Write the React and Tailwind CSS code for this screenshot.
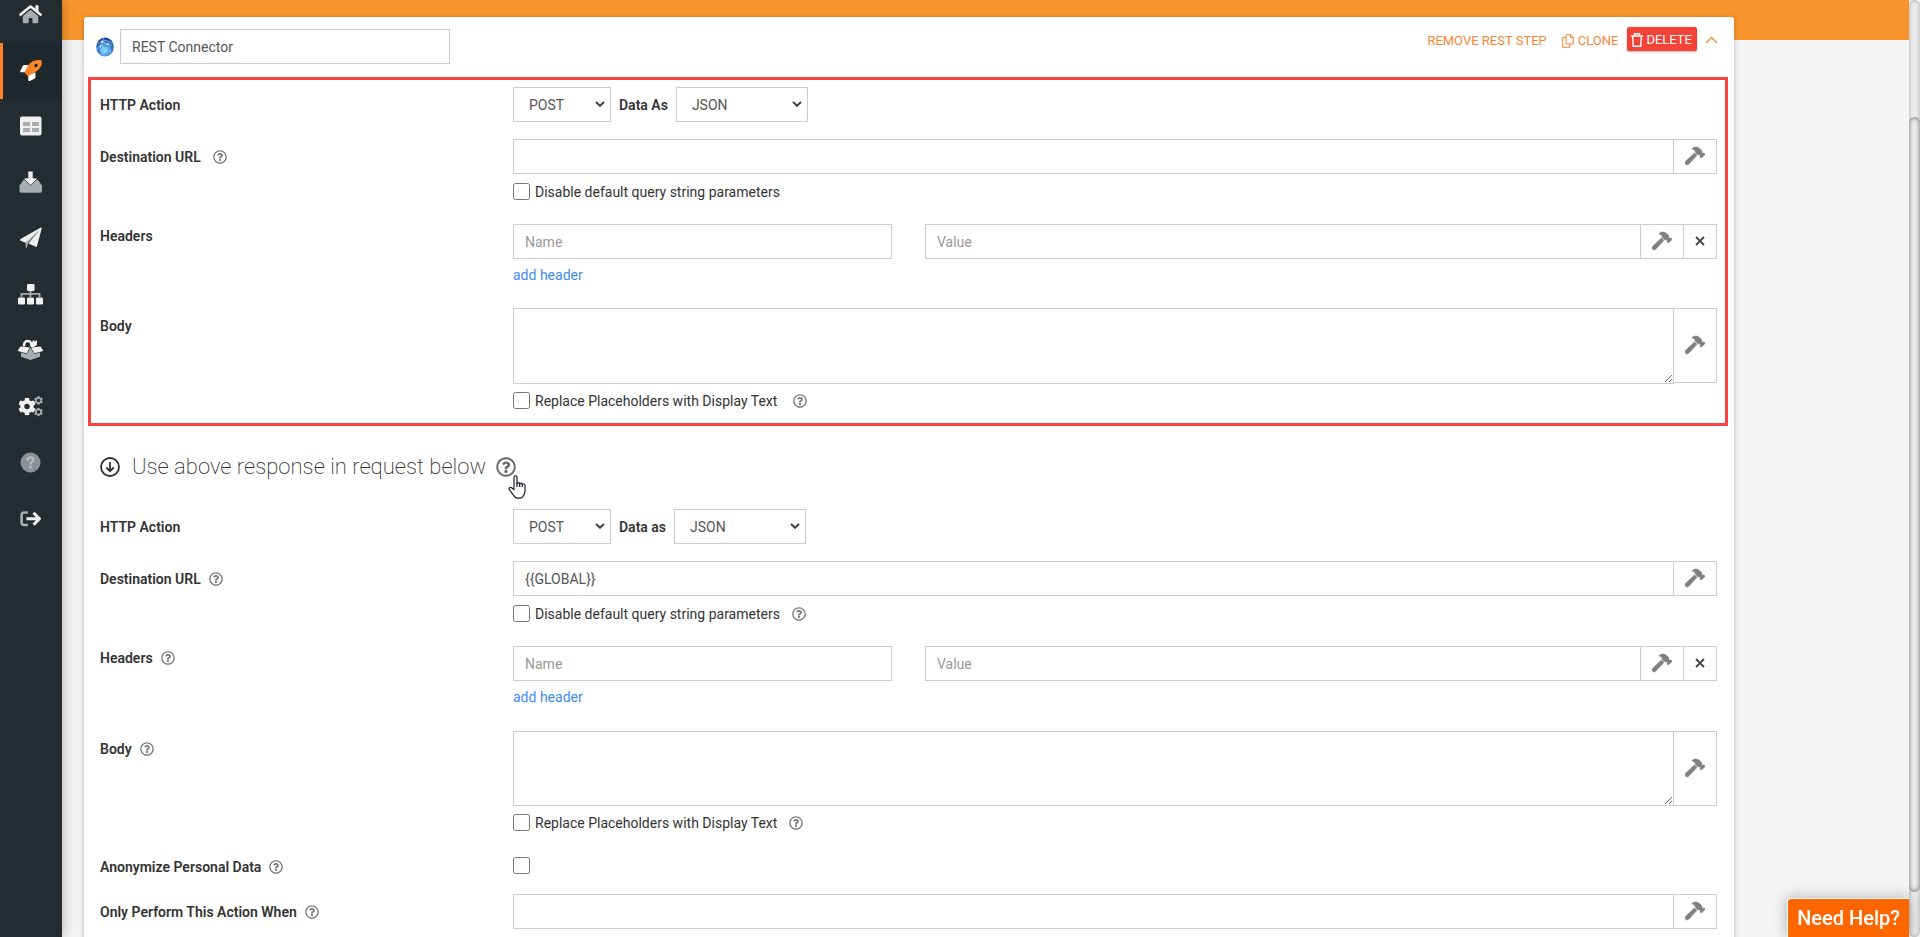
import { useId } from "react";
import { FaCog, FaHammer, FaRegQuestionCircle } from "react-icons/fa";

const LIGHT = "#f0f0f0";
const DIM = "#a9adaf";

function NavIcon({ name }) {
  const shapes = {
    Home: (
      <g transform="translate(1 2) scale(0.04)">
        <path fill={DIM} d="M280.37 148.26L96 300.11V464a16 16 0 0 0 16 16l112.06-.29a16 16 0 0 0 15.92-16V368a16 16 0 0 1 16-16h64a16 16 0 0 1 16 16v95.64a16 16 0 0 0 16 16.05L464 480a16 16 0 0 0 16-16V300L295.67 148.26a12.19 12.19 0 0 0-15.3 0z" />
        <path fill={LIGHT} d="M571.6 251.47L488 182.56V44.05a12 12 0 0 0-12-12h-56a12 12 0 0 0-12 12v72.61L318.47 43a48 48 0 0 0-61 0L4.34 251.47a12 12 0 0 0-1.6 16.9l25.5 31A12 12 0 0 0 45.15 301l235.22-193.74a12.19 12.19 0 0 1 15.3 0L530.9 301a12 12 0 0 0 16.9-1.6l25.5-31a12 12 0 0 0-1.7-16.93z" />
      </g>
    ),
    Campaigns: (
      <g transform="translate(2 1.5)">
        <path fill="#fff" d="M9 5.5H4.6c-.8 0-1.5.5-1.9 1.2L.3 11.2c-.4.8.1 1.5.9 1.5H6z" />
        <path fill="#fff" d="M15.500 13v4.400c0 .8-.5 1.500-1.200 1.900l-4.500 2.100c-.8.400-1.500-.1-1.500-.9V15z" />
        <path fill="#fd8427" d="M21.500.8C15.300-.5 11 1.600 8.200 6L4.900 11.600c-.5.9-.4 1.500.2 2.100l2.200 2.200c.6.600 1.200.7 2.100.2l5.600-3.300C20 9.800 22.700 6 21.500.8z" />
        <circle cx="16" cy="6" r="1.700" fill="#1e272b" />
      </g>
    ),
    Tables: (
      <g transform="translate(0 -0.5)">
        <rect x="2" y="3" width="21.500" height="19" rx="2" fill={LIGHT} />
        <path fill={DIM} d="M5 8.500h7v4H5zM14 8.500h7v4h-7zM5 14.500h7v4H5zM14 14.500h7v4h-7z" />
      </g>
    ),
    Imports: (
      <g transform="translate(0 -0.5)">
        <path fill={DIM} d="M5.500 10.500h3.300l3.900 4.500 3.900-4.500h3.300l4.100 5.500v5.500a1.800 1.800 0 0 1-1.800 1.800H3.300a1.800 1.800 0 0 1-1.800-1.800V16z" />
        <path fill={LIGHT} stroke="#232d31" strokeWidth="0.800" d="M9.900 2.300c0-.4.3-.7.700-.7h3.800c.4 0 .7.3.7.700V8.500h3.200c.7 0 1 .8.500 1.300l-5.600 5.700a.9.9 0 0 1-1.300 0L6.300 9.800C5.800 9.300 6.100 8.500 6.800 8.500h3.100z" />
      </g>
    ),
    Send: (
      <g>
        <path fill={DIM} d="M7.500 15.500L22.500 2 10 17.200 8.700 22.100c-.6-.1-1-.5-1-1.100z" />
        <path fill={LIGHT} d="M22.400 1.700L2.500 13c-.7.400-.6 1.400.1 1.700l4.900 2L21 4.300 10.500 17.600l7.200 3.100c.6.200 1.200-.1 1.300-.8L23.700 2.700c.1-.9-.6-1.400-1.300-1z" />
      </g>
    ),
    Hierarchy: (
      <g>
        <path d="M12.500 8v7M3.500 15v-3.200h18V15" fill="none" stroke={DIM} strokeWidth="1.800" />
        <rect x="9" y="2" width="7.500" height="7" rx="1.200" fill={LIGHT} />
        <rect x="0" y="15.500" width="7" height="7" rx="1.200" fill={LIGHT} />
        <rect x="9" y="15.500" width="7" height="7" rx="1.200" fill={LIGHT} />
        <rect x="18" y="15.500" width="7" height="7" rx="1.200" fill={LIGHT} />
      </g>
    ),
    Packages: (
      <g>
        <path fill="none" stroke={LIGHT} strokeWidth="2.400" d="M6.500 8.500C5 6 7 3 9.700 3c2.600 0 4.200 2 3.500 5.500" />
        <path fill={LIGHT} d="M13.500 5.300l1.800-3.200 1.400 1.400L18.900 2 19 7l-3 2h-3z" />
        <path fill={DIM} d="M3 14.500l5.500 1.500 4-6 4 6L22 14.500v4.200L12.500 22 3 18.700z" />
        <path fill={LIGHT} d="M2.500 8.500l9.500 1-3.500 5.700L.7 13.300c-.7-.2-.9-.8-.6-1.300zM22.500 8.500l-9.500 1 3.500 5.700 7.800-1.900c.7-.2.9-.8.600-1.300z" />
      </g>
    ),
    Settings: (
      <g>
        <FaCog x="0" y="3.500" size="18" color={LIGHT} />
        <FaCog x="16" y="2" size="9" color={DIM} />
        <FaCog x="16" y="13.500" size="9" color={DIM} />
        <circle cx="20.500" cy="6.500" r="1.700" fill="#232d31" />
        <circle cx="20.500" cy="18" r="1.700" fill="#232d31" />
      </g>
    ),
    Help: (
      <g>
        <circle cx="12.500" cy="12.500" r="10" fill="#8b9194" />
        <path d="M9.500 9.800c.3-1.700 1.500-2.500 3.100-2.500 1.700 0 3 .9 3 2.500 0 1.900-3 2-3 4.200" fill="none" stroke="#b9bdbf" strokeWidth="2.200" strokeLinecap="round" />
        <circle cx="12.500" cy="17.300" r="1.500" fill="#b9bdbf" />
      </g>
    ),
    "Log out": (
      <g>
        <path d="M9.800 6.500H6.200C4.600 6.500 3.600 7.500 3.600 9v7.500c0 1.500 1 2.500 2.600 2.500h3.600" fill="none" stroke={DIM} strokeWidth="2.600" />
        <path d="M8.500 12.700h13M15.500 6.700l6 6-6 6" fill="none" stroke={LIGHT} strokeWidth="3" strokeLinejoin="round" />
      </g>
    ),
  };
  return (
    <svg viewBox="0 0 25 25" className="h-[25px] w-[25px]" aria-hidden="true">
      {shapes[name]}
    </svg>
  );
}

function Sidebar() {
  const items = ["Home", "Campaigns", "Tables", "Imports", "Send", "Hierarchy", "Packages", "Settings", "Help", "Log out"];
  return (
    <nav className="relative z-10 w-[62px] shrink-0 bg-[#232d31] shadow-[0_0_12px_rgba(0,0,0,0.3)]">
      <div className="-mt-[13px] flex flex-col">
        {items.map((name) => (
          <a
            key={name}
            href="#"
            aria-label={name}
            className={
              name === "Campaigns"
                ? "flex h-14 items-center justify-center border-l-[3px] border-[#fd8427] bg-[#1e272b] pr-1 pb-px"
                : "flex h-14 items-center justify-center pr-px pb-px"
            }
          >
            <NavIcon name={name} />
          </a>
        ))}
      </div>
    </nav>
  );
}

function Globe() {
  return (
    <svg viewBox="0 0 18 20" className="h-5 w-[18px] shrink-0" aria-hidden="true">
      <defs>
        <radialGradient id="globe" cx="50%" cy="72%" r="70%">
          <stop offset="0" stopColor="#7fd0fb" />
          <stop offset="0.45" stopColor="#3b8fdd" />
          <stop offset="1" stopColor="#123f94" />
        </radialGradient>
      </defs>
      <ellipse cx="9" cy="10" rx="8.800" ry="9.500" fill="url(#globe)" />
      <g fill="none" stroke="#cfe6fb" strokeWidth="0.700" opacity="0.800">
        <path d="M1.500 7C6 2.500 12 3 16.500 6.500M8 1C4 6 3.500 12 7 18M5 4c6 2 9.500 6 9.500 12M1 12c3-5 9-7 15.500-3" />
      </g>
      <path d="M6 8.500l5 1.500 1.500 4-4 2.500-3.500-3z" fill="#8fd8ff" opacity="0.600" />
      <g fill="#e8f4ff">
        <circle cx="6.500" cy="5" r="0.900" />
        <circle cx="12" cy="7" r="0.900" />
        <circle cx="4.500" cy="9.500" r="0.800" />
      </g>
    </svg>
  );
}

function HelpTip({ label }) {
  return (
    <button type="button" aria-label={label} className="text-[#777]">
      <FaRegQuestionCircle className="h-[14px] w-[14px]" />
    </button>
  );
}

function Row({ label, htmlFor, help, wide, shift = "pt-2", children }) {
  return (
    <div className="grid grid-cols-[413px_1fr]">
      <div className={`flex items-center self-start ${shift} ${wide ? "gap-3" : "gap-2"}`}>
        <label htmlFor={htmlFor} className="font-semibold">
          {label}
        </label>
        {help && <HelpTip label={`About ${label}`} />}
      </div>
      <div className="min-w-0">{children}</div>
    </div>
  );
}

function HammerButton({ height = "h-[35px]" }) {
  return (
    <button
      type="button"
      aria-label="Insert field"
      className={`flex w-[43px] shrink-0 items-center justify-center border border-l-0 border-[#ccc] pb-px text-[#808080] ${height}`}
    >
      <FaHammer className="h-5 w-5" stroke="currentColor" strokeWidth="18" />
    </button>
  );
}

const INPUT = "h-[35px] w-full min-w-0 border border-[#ccc] bg-white px-[11px] text-[#555] outline-none placeholder:text-[#999]";

function Select({ id, options, width }) {
  return (
    <div className={`relative ${width}`}>
      <select id={id} className="h-[35px] w-full appearance-none border border-[#ccc] bg-white pr-6 pl-[15px] text-[#555] outline-none">
        {options.map((option) => (
          <option key={option}>{option}</option>
        ))}
      </select>
      <svg viewBox="0 0 10 6" className="pointer-events-none absolute top-[14px] right-[6px] h-[6px] w-[10px]" aria-hidden="true">
        <path d="M1 1l4 3.800L9 1" fill="none" stroke="#444" strokeWidth="2" />
      </svg>
    </div>
  );
}

function Check({ id, label, help, wide }) {
  return (
    <div className={`flex h-[17px] items-center ${wide ? "gap-4" : "gap-3"}`}>
      <div className="flex items-center gap-[5px]">
        <input id={id} type="checkbox" className="h-[17px] w-[17px]" />
        <label htmlFor={id}>{label}</label>
      </div>
      {help && <HelpTip label={`About ${label}`} />}
    </div>
  );
}

function RequestForm({ dataLabel, url, first }) {
  const id = useId();
  return (
    <>
      <Row label="HTTP Action" htmlFor={`${id}action`}>
        <div className="flex items-center gap-2">
          <Select id={`${id}action`} options={["POST", "GET"]} width="w-[98px]" />
          <label htmlFor={`${id}data`} className="font-semibold">
            {dataLabel}
          </label>
          <Select id={`${id}data`} options={["JSON", "XML"]} width="w-[132px]" />
        </div>
      </Row>
      <div className="h-[17px]" />
      <Row label="Destination URL" htmlFor={`${id}url`} help wide={first}>
        <div className="flex">
          <input id={`${id}url`} type="text" defaultValue={url} className={INPUT} />
          <HammerButton />
        </div>
        <div className="mt-[9px]">
          <Check id={`${id}query`} label="Disable default query string parameters" help={!first} />
        </div>
      </Row>
      <div className="h-6" />
      <Row label="Headers" htmlFor={`${id}name`} help={!first} shift="pt-[2px]">
        <div className="grid grid-cols-[379fr_792fr] gap-[33px]">
          <input id={`${id}name`} type="text" placeholder="Name" className={INPUT} />
          <div className="flex">
            <input type="text" placeholder="Value" aria-label="Header value" className={INPUT} />
            <HammerButton />
            <button
              type="button"
              aria-label="Remove header"
              className="flex h-[35px] w-[33px] shrink-0 items-center justify-center border border-l-0 border-[#ccc] pb-px"
            >
              <svg viewBox="0 0 10 10" className="h-[10px] w-[10px]" aria-hidden="true">
                <path d="M1 1l8 8M9 1l-8 8" stroke="#444" strokeWidth="1.800" />
              </svg>
            </button>
          </div>
        </div>
        <a href="#" className="mt-[6px] inline-block text-[#3f8cf4]">
          add header
        </a>
      </Row>
      <div className={first ? "h-[23px]" : "h-6"} />
      <Row label="Body" htmlFor={`${id}body`} help={!first}>
        <div className="flex items-start">
          <textarea
            id={`${id}body`}
            className={`${first ? "h-[76px]" : "h-[75px]"} w-full min-w-0 resize border border-[#ccc] px-[11px] py-2 text-[#555] outline-none`}
          />
          <HammerButton height="h-[75px]" />
        </div>
        <div className="mt-2">
          <Check id={`${id}replace`} label="Replace Placeholders with Display Text" help wide={first} />
        </div>
      </Row>
    </>
  );
}

function Toolbar() {
  return (
    <div className="flex h-6 items-center text-[13px] text-[#fa8537]">
      <button type="button" className="pt-[3px]">
        REMOVE REST STEP
      </button>
      <button type="button" className="ml-[15px] flex items-center gap-1 pt-[3px]">
        <svg viewBox="0 0 12 14" className="h-[14px] w-3" fill="none" stroke="currentColor" aria-hidden="true">
          <path d="M4 .8h5l2.300 2.200v7H4zM8.500 1v2.500h2.500M4 3.500H.7v9.800h7.200V10" />
        </svg>
        CLONE
      </button>
      <button type="button" className="ml-[9px] flex h-6 items-center gap-[3px] rounded-[2px] bg-[#f44336] pt-px pr-[5px] pl-1 text-white shadow-[0_1px_2px_rgba(0,0,0,0.3)]">
        <svg viewBox="0 0 12 14" className="h-[14px] w-3" fill="none" stroke="currentColor" strokeWidth="1.400" aria-hidden="true">
          <path d="M0 3h12M3.500 3V.8h5V3M1.700 3l.5 10.200h7.600l.5-10.200" />
        </svg>
        DELETE
      </button>
      <button type="button" aria-label="Collapse" className="ml-2 pt-px">
        <svg viewBox="0 0 13 8" className="h-2 w-[13px]" fill="none" stroke="currentColor" strokeWidth="1.400" aria-hidden="true">
          <path d="M1 7l5.500-5.500L12 7" />
        </svg>
      </button>
    </div>
  );
}

function SectionHeading() {
  return (
    <div className="flex h-[83px] items-center pb-[2px]">
      <svg viewBox="0 0 20 20" className="h-5 w-5" fill="none" stroke="#333" strokeWidth="1.800" aria-hidden="true">
        <circle cx="10" cy="10" r="9" />
        <path d="M10 5v9M6.300 10.500L10 14.200l3.700-3.700" />
      </svg>
      <h2 className="ml-3 text-[22px] leading-7 font-extralight">Use above response in request below</h2>
      <span className="relative ml-[10px]">
        <button type="button" aria-label="About chained requests" className="block text-[#666]">
          <FaRegQuestionCircle className="h-5 w-5" />
        </button>
        <svg viewBox="0 0 18 24" className="absolute top-[18px] left-3 h-6 w-[18px]" aria-hidden="true">
          <path
            d="M6 14.500V2.300C6 .3 9 .3 9 2.300V9c0-1.800 2.700-1.800 2.700.2 0-1.600 2.600-1.500 2.600.5 0-1.400 2.700-1.400 2.700.8V16c0 2-1 3.500-1.700 5-.6 1.300-1.800 2.200-3.300 2.200H9.500c-1.500 0-2.500-.8-3.300-2L1.300 14.700C.3 13 2.300 11.600 3.600 12.800z"
            fill="#fff"
            stroke="#1c1c2c"
            strokeWidth="1.200"
            strokeLinejoin="round"
          />
          <path d="M9 8.500V12M11.700 9v3M14.300 9.500V12" stroke="#1c1c2c" strokeWidth="1.200" />
        </svg>
      </span>
    </div>
  );
}

export default function App() {
  return (
    <div className="flex h-screen overflow-hidden bg-[#f4f4f4] font-[Roboto,sans-serif] text-sm leading-5 text-[#333]">
      <Sidebar />
      <main className="min-w-0 flex-1 bg-[linear-gradient(#f8962d_40px,transparent_40px)] pt-[17px] pr-[175px] pl-[22px]">
        <section className="min-h-screen rounded-[3px] bg-white shadow-[0_1px_5px_rgba(0,0,0,0.25)]">
          <header className="flex h-[60px] items-start justify-between pt-[10px] pr-4 pl-3">
            <div className="flex items-center gap-[6px] pt-[2px]">
              <Globe />
              <input type="text" aria-label="Step name" defaultValue="REST Connector" className={`${INPUT} max-w-[330px]`} size="60" />
            </div>
            <Toolbar />
          </header>
          <div className="mr-[6px] ml-1 border-[3px] border-[#fb4242] pt-[7px] pr-2 pb-[14px] pl-[9px]">
            <RequestForm dataLabel="Data As" url="" first />
          </div>
          <div className="pr-[17px] pl-4">
            <SectionHeading />
            <RequestForm dataLabel="Data as" url="{{GLOBAL}}" />
            <div className="h-[26px]" />
            <Row label="Anonymize Personal Data" htmlFor="anonymize" help shift="pt-0">
              <input id="anonymize" type="checkbox" className="block h-[17px] w-[17px]" />
            </Row>
            <div className="h-[17px]" />
            <Row label="Only Perform This Action When" htmlFor="condition" help>
              <div className="flex">
                <input id="condition" type="text" className={INPUT} />
                <HammerButton />
              </div>
            </Row>
          </div>
        </section>
      </main>
      <div
        className="flex w-[11px] shrink-0 flex-col rounded-[6px] bg-[#ececec] pt-[117px] pb-[45px] shadow-[inset_0_0_4px_rgba(0,0,0,0.3)]"
        aria-hidden="true"
      >
        <div className="flex-1 rounded-[6px] bg-[#efefef] shadow-[inset_0_0_5px_rgba(0,0,0,0.6)]" />
      </div>
      <button
        type="button"
        className="fixed right-[11px] bottom-0 h-[39px] rounded-tl-[4px] border-t border-l border-white bg-[#ff6600] px-[9px] text-xl font-medium text-white shadow-[0_0_14px_rgba(0,0,0,0.3)]"
      >
        Need Help?
      </button>
    </div>
  );
}
